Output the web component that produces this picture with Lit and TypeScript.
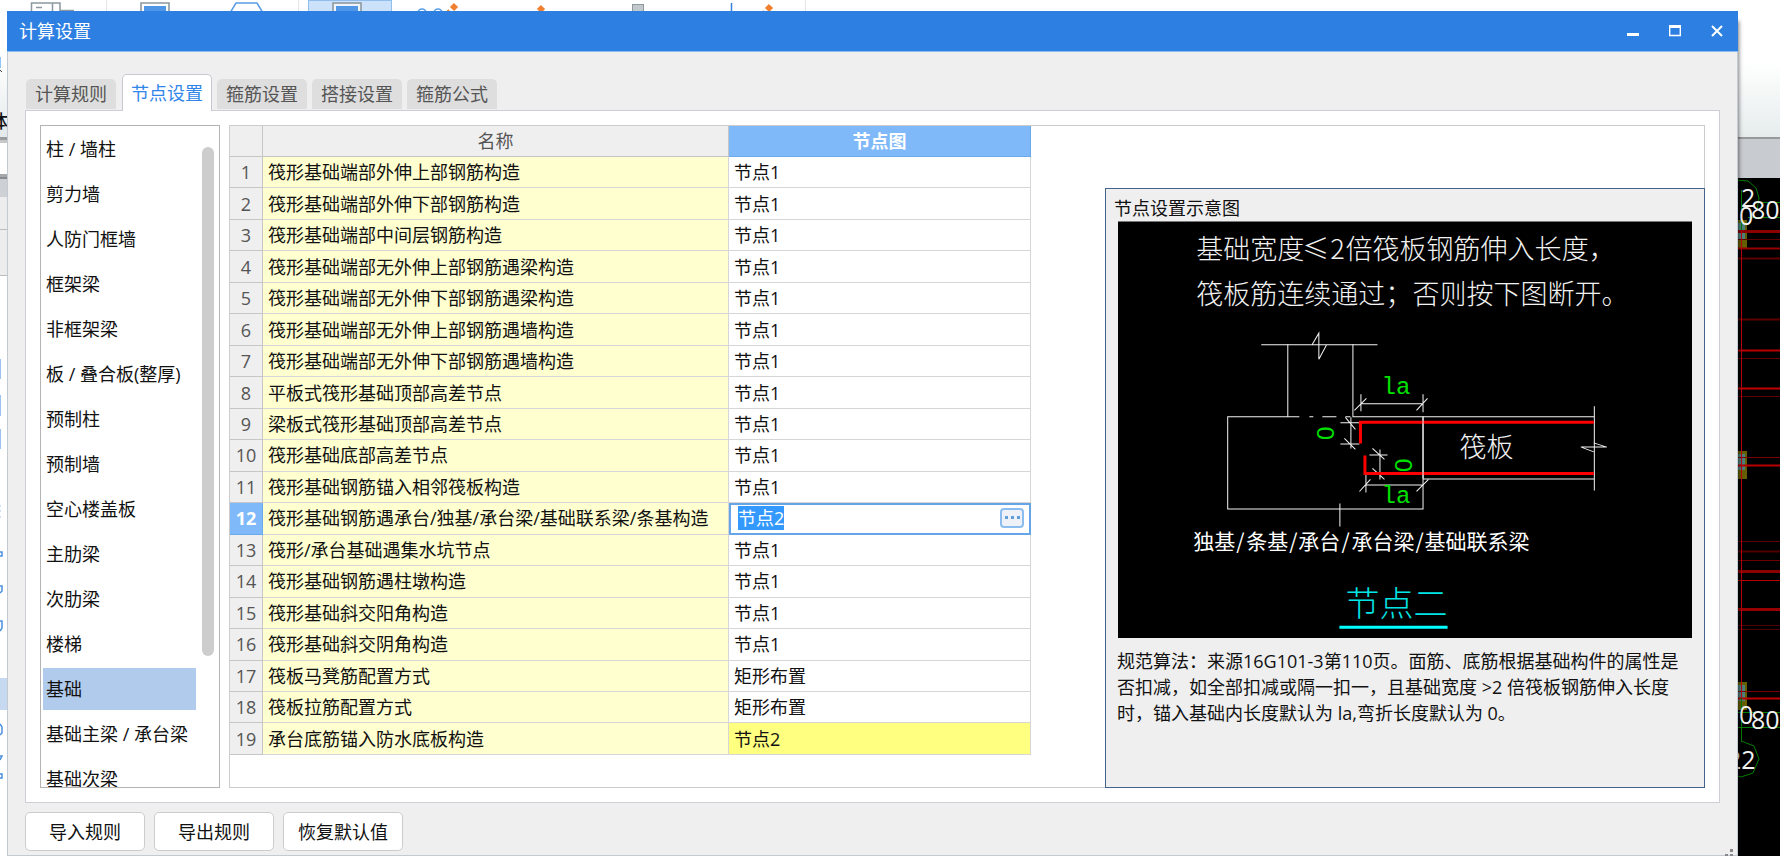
import { LitElement, html, svg, css } from "lit";
import { customElement, property, state } from "lit/decorators.js";
import { classMap } from "lit/directives/class-map.js";

const FONT = css`"Open Sans", "Noto Sans CJK SC", sans-serif`;

interface NodeRow {
  name: string;
  value: string;
}

const ROWS: NodeRow[] = [
  { name: "筏形基础端部外伸上部钢筋构造", value: "节点1" },
  { name: "筏形基础端部外伸下部钢筋构造", value: "节点1" },
  { name: "筏形基础端部中间层钢筋构造", value: "节点1" },
  { name: "筏形基础端部无外伸上部钢筋遇梁构造", value: "节点1" },
  { name: "筏形基础端部无外伸下部钢筋遇梁构造", value: "节点1" },
  { name: "筏形基础端部无外伸上部钢筋遇墙构造", value: "节点1" },
  { name: "筏形基础端部无外伸下部钢筋遇墙构造", value: "节点1" },
  { name: "平板式筏形基础顶部高差节点", value: "节点1" },
  { name: "梁板式筏形基础顶部高差节点", value: "节点1" },
  { name: "筏形基础底部高差节点", value: "节点1" },
  { name: "筏形基础钢筋锚入相邻筏板构造", value: "节点1" },
  { name: "筏形基础钢筋遇承台/独基/承台梁/基础联系梁/条基构造", value: "节点2" },
  { name: "筏形/承台基础遇集水坑节点", value: "节点1" },
  { name: "筏形基础钢筋遇柱墩构造", value: "节点1" },
  { name: "筏形基础斜交阳角构造", value: "节点1" },
  { name: "筏形基础斜交阴角构造", value: "节点1" },
  { name: "筏板马凳筋配置方式", value: "矩形布置" },
  { name: "筏板拉筋配置方式", value: "矩形布置" },
  { name: "承台底筋锚入防水底板构造", value: "节点2" },
];

const CATEGORIES = [
  "柱 / 墙柱", "剪力墙", "人防门框墙", "框架梁", "非框架梁", "板 / 叠合板(整厚)",
  "预制柱", "预制墙", "空心楼盖板", "主肋梁", "次肋梁", "楼梯", "基础",
  "基础主梁 / 承台梁", "基础次梁",
];

const TABS = ["计算规则", "节点设置", "箍筋设置", "搭接设置", "箍筋公式"];

/* The CAD workspace and ribbon that lie behind the dialog. */
@customElement("app-backdrop")
export class AppBackdrop extends LitElement {
  static styles = css`
    :host { display: block; position: absolute; inset: 0; overflow: hidden; background: #fff; }
    svg { position: absolute; display: block; top: 0; }
    .left { left: 0; }
    .right { right: 0; }
    .label { font-family: "Open Sans", sans-serif; font-size: 25px; fill: #f2f2f2; }
    .side { font-family: "Noto Sans CJK SC", sans-serif; font-size: 18px; font-weight: 500; fill: #111; }
  `;

  private ribbon() {
    const pencil = (x: number, y: number) => svg`
      <path d="M${x} ${y + 9} l6 -6" stroke="#f08030" stroke-width="5"/>
      <path d="M${x + 8} ${y + 1} l4 -4" stroke="#f08030" stroke-width="6"/>`;
    return html`<svg class="left" width="1000" height="14" viewBox="0 0 1000 14" fill="none" aria-hidden="true">
      <path d="M31.5 14V3H60V14M52.5 3V14M60 10.5H74M36 7.5H42" stroke="#8c989f" stroke-width="1.5"/>
      <path d="M106.5 0V14M298.5 0V14M805.5 0V14" stroke="#e6e6e6"/>
      <path d="M141 14V3H169V14" stroke="#8c989f" stroke-width="1.6"/>
      <rect x="144" y="6" width="22" height="8" fill="#4f96e6"/>
      <path d="M230 13L236 3H257L263 13" stroke="#5b9de8" stroke-width="1.5"/>
      <rect x="308.500" y="0.500" width="83" height="14" fill="#cbe2fa" stroke="#8fbdf0"/>
      <rect x="333" y="3" width="28" height="12" fill="#eef4fb" stroke="#8c989f" stroke-width="1.6"/>
      <rect x="336" y="6" width="22" height="8" fill="#4f96e6"/>
      <circle cx="422" cy="13" r="4" stroke="#5b9de8" stroke-width="1.6"/>
      <circle cx="438" cy="13" r="4" stroke="#5b9de8" stroke-width="1.6"/>
      ${pencil(444, 8)}${pencil(531, 10)}${pencil(759, 9)}
      <rect x="632.500" y="4.500" width="11" height="10" fill="#c2c8cc" stroke="#8c989f"/>
      <path d="M731.500 3V14" stroke="#3a80d8" stroke-width="1.5"/>
    </svg>`;
  }

  private leftEdge() {
    return html`<svg class="left" width="8" height="856" viewBox="0 0 8 856" fill="none" aria-hidden="true">
      <defs><linearGradient id="fade" x2="0" y2="1"><stop offset="0" stop-color="#fff"/><stop offset="1" stop-color="#e3e9ea"/></linearGradient></defs>
      <rect y="60" width="8" height="77" fill="url(#fade)"/>
      <rect y="57" width="1" height="11" fill="#8ec4f5"/>
      <path d="M0 70l2 2" stroke="#334"/>
      <text class="side" x="-10" y="128">体</text>
      <rect y="137" width="8" height="3" fill="#9a9d9f"/><rect y="140" width="8" height="3" fill="#c5c7c9"/>
      <rect y="174" width="8" height="3" fill="#a5a8ab"/><rect y="177" width="8" height="2" fill="#888c90"/>
      <rect y="179" width="8" height="18" fill="#cdd0d5"/>
      <rect y="197" width="8" height="79" fill="#ededed"/>
      <path d="M0 229.500H8M0 275.500H8" stroke="#bdbdbd"/>
      <path d="M.500 359V379M.500 395V416M.500 429V449" stroke="#9cc3f0"/>
      <path d="M0 506H1M0 511H1M0 517H1" stroke="#9cc3f0"/>
      <path d="M0 552H2V556H0M0 586H2V591L0 593M0 621H2V628L0 631M0 724L2 727V733L0 735M0 756H2L0 760M0 774H2V778H0" stroke="#4a90e0" stroke-width="1.500"/>
      <rect y="678" width="8" height="32" fill="#c7d9f1"/>
    </svg>`;
  }

  private canvas() {
    const line = (y: number, color: string, w = 1) =>
      svg`<path d="M0 ${y + 0.5}H50" stroke=${color} stroke-width=${w}/>`;
    const pier = (y: number, h: number) => svg`
      <rect x="0" y=${y} width="17" height=${h} fill="#665f00"/>
      <rect x="8" y=${y + 3} width="7" height=${h - 12} fill="#4d7f7c"/>`;
    return html`<svg class="right" width="50" height="856" viewBox="0 0 50 856" fill="none" aria-hidden="true">
      <defs><linearGradient id="sky" x2="0" y2="1"><stop offset="0" stop-color="#fff"/><stop offset="1" stop-color="#e6ecec"/></linearGradient></defs>
      <rect y="62" width="50" height="75" fill="url(#sky)"/>
      <rect y="137" width="50" height="2" fill="#97999b"/>
      <rect y="139" width="50" height="39" fill="#c8cbd0"/>
      <rect y="178" width="50" height="678" fill="#000"/>
      ${pier(220, 28)}${pier(451, 28)}${pier(682, 28)}
      ${line(231, "#8b0000", 3)}${line(239, "#5c0000")}${line(248, "#960000", 2)}${line(258, "#5c0000", 2)}
      ${line(319, "#5c0000", 2)}${line(350, "#b80000", 2)}${line(358, "#5c0000")}${line(388, "#c00000", 2)}${line(396, "#5c0000")}
      ${line(457, "#780000")}${line(465, "#b80000", 2)}${line(541, "#600000")}${line(551, "#500000", 2)}${line(560, "#6c0000")}
      ${line(571, "#8b0000", 3)}${line(580, "#b80000")}${line(609, "#960000", 3)}${line(625, "#500000")}${line(629, "#500000")}
      ${line(691, "#780000")}${line(698, "#b80000", 2)}
      <path d="M11.500 230V698" stroke="#c00010"/>
      <path d="M11.500 190V230M30 202.500H50M18 217.500H50M11.500 698V742M0 712.500H50M0 727.500H50" stroke="#007d00"/>
      <path d="M5 180L18 181L26 188L29 198L27 210M11 741L24 746L29 759L23 773L11 777L0 774" stroke="#007d00"/>
      <text class="label" x="11" y="207">2</text>
      <text class="label" x="9" y="225">0</text>
      <text class="label" x="21" y="219">80</text>
      <text class="label" x="9" y="724">0</text>
      <text class="label" x="21" y="729">80</text>
      <text class="label" x="-3" y="769">22</text>
    </svg>`;
  }

  render() {
    return html`${this.ribbon()}${this.leftEdge()}${this.canvas()}`;
  }
}

/* Section drawing of the selected node. */
@customElement("node-diagram")
export class NodeDiagram extends LitElement {
  static styles = css`
    :host { display: block; background: #000; border-top: 1px solid #777; }
    svg { display: block; width: 100%; height: auto; }
    text { font-family: "Noto Sans CJK SC", sans-serif; }
    .note { font-size: 27px; font-weight: 300; fill: #f2f2f2; }
    .caption { font-size: 21px; fill: #fff; }
    .title { font-size: 34px; font-weight: 300; fill: #00e5e5; }
    .dim { font-family: "Liberation Mono", monospace; font-size: 24px; fill: #00e000; }
    .zero { font-family: "Liberation Sans", sans-serif; font-size: 24px; fill: #00e000; text-anchor: middle; }
  `;

  render() {
    return html`<svg viewBox="0 0 573 415" fill="none" role="img" aria-label="节点二">
      <text class="note" y="37"><tspan x="78">基础宽度</tspan><tspan x="184">≤</tspan><tspan x="212">2</tspan><tspan x="227">倍筏板钢筋伸入长度，</tspan></text>
      <text class="note" x="78" y="82">筏板筋连续通过；否则按下图断开。</text>
      <g stroke="#f4f4f4">
        <path d="M143 122.500H259M194 122L200.500 111V137L208 123"/>
        <path d="M169.500 122V194M234.500 122V194M181 194.500H109.500V286.500H304.500V194M191 194.500H195M204 194.500H218M227 194.500H232M234 194.500H475M304 256.500H475M475.500 184V268"/>
        <path d="M462 224.500H488M475 220.500L487 224.500M463 225L475 229.500"/>
        <path d="M242.500 172V189M304.500 172V190M242 181.500H304M236 188L248 176M298 188L309 176"/>
        <path d="M222 200.500H241M222 221.500H241M232.500 195V226M227 195L237 207M226 216L237 227"/>
        <path d="M251 232.500H269M251 251.500H269M261.500 227V257M254 226L266 237M254 246L266 257"/>
        <path d="M247.500 252V270M247 262.500H304M241 269L252 257M298 269L310 257"/>
        <path d="M221.500 281V304"/>
      </g>
      <path d="M475 200H242V221M246.500 233V251H475" stroke="#f00" stroke-width="3"/>
      <path d="M304.500 194V256" stroke="#f4f4f4"/>
      <text class="dim" x="263" y="172">la</text>
      <text class="dim" x="263" y="281">la</text>
      <text class="zero" transform="translate(216 211) rotate(-90)">0</text>
      <text class="zero" transform="translate(293 243) rotate(-90)">0</text>
      <text class="note" x="341" y="235">筏板</text>
      <text class="caption" y="326"><tspan x="75">独基</tspan><tspan x="118">/</tspan><tspan x="128">条基</tspan><tspan x="171">/</tspan><tspan x="180">承台</tspan><tspan x="223">/</tspan><tspan x="233">承台梁</tspan><tspan x="297">/</tspan><tspan x="306">基础联系梁</tspan></text>
      <text class="title" x="227" y="393">节点二</text>
      <path d="M221 404.500H329" stroke="#0ff" stroke-width="3"/>
    </svg>`;
  }
}

@customElement("node-preview")
export class NodePreview extends LitElement {
  static styles = css`
    :host { display: flex; flex-direction: column; box-sizing: border-box; background: #efefef; border: 1px solid #44638f; padding: 6px 12px 0 8px; font: 18px/26px ${FONT}; color: #111; }
    .heading { margin: 0; font-size: 18px; font-weight: 400; line-height: 26px; }
    .diagram { margin-left: 4px; }
    .note { margin: 10px 0 0 3px; white-space: nowrap; }
  `;

  render() {
    return html`
      <h2 class="heading">节点设置示意图</h2>
      <node-diagram class="diagram"></node-diagram>
      <p class="note">规范算法：来源16G101-3第110页。面筋、底筋根据基础构件的属性是<br>否扣减，如全部扣减或隔一扣一，且基础宽度 &gt;2 倍筏板钢筋伸入长度<br>时，锚入基础内长度默认为 la,弯折长度默认为 0。</p>`;
  }
}

@customElement("node-table")
export class NodeTable extends LitElement {
  static styles = css`
    :host { display: block; }
    .grid { border-collapse: separate; border-spacing: 0; table-layout: fixed; width: 801px; height: 629px; font: 18px/24px ${FONT}; color: #111; }
    .index { width: 33px; }
    .name { width: 466px; }
    .value { width: 302px; }
    th, td { box-sizing: border-box; padding: 0; border: 0 solid #d6d6d6; border-width: 0 1px 1px 0; font-weight: 400; overflow: hidden; white-space: nowrap; }
    th { background: #efefef; border-color: #c6c6c6; color: #555; text-align: center; }
    thead th { height: 31px; }
    thead .current { background: #7fb9f9; border-color: #6aa9ec; color: #fff; font-weight: 700; }
    td { padding-left: 5px; }
    .label { background: #ffffcf; }
    .changed { background: #ffff80; }
    .active { background: #7fb9f9; border-color: #6aa9ec; color: #fff; font-weight: 700; }
    .editing { padding: 0; border-color: #66a6e8; box-shadow: inset 2px 2px #66a6e8, inset -1px -1px #66a6e8; }
    .editor { display: flex; align-items: center; height: 24px; padding: 0 6px 0 9px; }
    .field { flex: 1; min-width: 0; height: 24px; border: 0; padding: 0; outline: 0; background: none; font: inherit; color: #111; }
    .field::selection { background: #3399ff; color: #fff; }
    .more { display: flex; align-items: center; justify-content: center; width: 24px; height: 20px; padding: 0; border: 2px solid #8bbdf0; border-radius: 4px; background: #eef2f8; }
  `;

  @state() private selected = 11;

  firstUpdated() {
    const field = this.renderRoot.querySelector<HTMLInputElement>(".field");
    field?.focus();
    field?.select();
  }

  private valueCell(row: NodeRow, i: number) {
    if (i !== this.selected) {
      return html`<td class=${classMap({ changed: i === ROWS.length - 1 })}>${row.value}</td>`;
    }
    return html`<td class="editing"><div class="editor">
      <input class="field" aria-label=${row.name} .value=${row.value}>
      <button class="more" aria-label="更多">
        <svg width="18" height="6" viewBox="0 0 18 6" fill="#5f9fe0"><rect x="2" y="1" width="3" height="3"/><rect x="8" y="1" width="3" height="3"/><rect x="14" y="1" width="3" height="3"/></svg>
      </button>
    </div></td>`;
  }

  render() {
    return html`<table class="grid">
      <colgroup><col class="index"><col class="name"><col class="value"></colgroup>
      <thead><tr><th></th><th scope="col">名称</th><th scope="col" class="current">节点图</th></tr></thead>
      <tbody>${ROWS.map((row, i) => html`<tr>
        <th scope="row" class=${classMap({ active: i === this.selected })}>${i + 1}</th>
        <td class="label">${row.name}</td>${this.valueCell(row, i)}
      </tr>`)}</tbody>
    </table>`;
  }
}

@customElement("category-list")
export class CategoryList extends LitElement {
  static styles = css`
    :host { display: block; position: relative; box-sizing: border-box; overflow: hidden; border: 1px solid #b4b4b4; background: #fff; }
    .items { display: flex; flex-direction: column; gap: 3px; list-style: none; margin: 0; padding: 2px 23px 0 2px; }
    .item { display: block; width: 100%; height: 42px; padding: 0 0 0 3px; border: 0; background: none; text-align: left; white-space: nowrap; font: 18px/42px ${FONT}; color: #111; }
    .selected { background: #b1cbec; }
    .thumb { position: absolute; top: 21px; right: 5px; bottom: 131px; width: 12px; border-radius: 6px; background: #cdcdcd; }
  `;

  @property() selected = "";

  render() {
    return html`<ul class="items">${CATEGORIES.map((c) => html`<li>
      <button class=${classMap({ item: true, selected: c === this.selected })} @click=${() => (this.selected = c)}>${c}</button>
    </li>`)}</ul><div class="thumb"></div>`;
  }
}

@customElement("app-root")
export class AppRoot extends LitElement {
  static styles = css`
    :host { display: block; position: relative; height: 100vh; overflow: hidden; padding: 11px 42px 0 7px; box-sizing: border-box; font: 18px/24px ${FONT}; color: #111; }
    .dialog { position: relative; display: flex; flex-direction: column; height: 100%; box-sizing: border-box; background: #efefef; box-shadow: 3px 8px 4px -2px rgba(0, 0, 0, 0.5); }
    .titlebar { display: flex; align-items: center; height: 40px; padding: 0 0 0 12px; background: #2d80e2; border-bottom: 1px solid #8dbcf3; color: #fff; }
    .caption { flex: 1; margin: 0; font-size: 18px; font-weight: 400; }
    .control { display: flex; align-items: center; justify-content: center; width: 42px; height: 40px; padding: 0; border: 0; background: none; }
    .frame { display: flex; flex: 1; flex-direction: column; min-height: 0; padding: 22px 17px 4px 17px; border: 1px solid #c3cad2; border-top: 0; }
    .tabs { display: flex; align-items: flex-end; gap: 5px; height: 36px; padding-left: 1px; }
    .tab { height: 30px; margin-bottom: 1px; padding: 0 9px; border: 0; border-radius: 5px 5px 0 0; background: #dedede; color: #555; font: inherit; }
    .current { position: relative; height: 37px; margin: 0 0 -1px 1px; padding: 0 8px; border: 1px solid #c6cad0; border-bottom: 0; background: #fff; color: #3186ea; }
    .panel { display: flex; flex: 1; gap: 9px; min-height: 0; padding: 14px; border: 1px solid #ccd0d4; background: #fff; }
    .categories { width: 180px; }
    .content { display: flex; flex: 1; justify-content: space-between; min-width: 0; border: 1px solid #ccc; }
    .preview { width: 600px; margin: 62px -1px -1px 0; }
    .actions { display: flex; gap: 9px; padding-top: 9px; }
    .action { width: 120px; height: 39px; padding: 0; border: 1px solid #ccc; border-radius: 5px; background: #fff; font: inherit; color: #111; }
    .grip { position: absolute; right: 4px; bottom: 0; }
  `;

  @state() private tab = 1;

  render() {
    return html`
      <app-backdrop></app-backdrop>
      <section class="dialog" role="dialog" aria-label="计算设置">
        <header class="titlebar">
          <h1 class="caption">计算设置</h1>
          <button class="control" aria-label="最小化"><svg width="12" height="12" viewBox="0 0 12 12"><rect y="8" width="12" height="3" fill="#fff"/></svg></button>
          <button class="control" aria-label="最大化"><svg width="12" height="12" viewBox="0 0 12 12" fill="none"><path d="M.7 1V10.500H11.300V1" stroke="#fff" stroke-width="1.400"/><rect width="12" height="3" fill="#fff"/></svg></button>
          <button class="control" aria-label="关闭"><svg width="12" height="12" viewBox="0 0 12 12" fill="none"><path d="M1 1L11 11M11 1L1 11" stroke="#fff" stroke-width="2"/></svg></button>
        </header>
        <div class="frame">
          <nav class="tabs">${TABS.map((t, i) => html`<button class=${classMap({ tab: true, current: i === this.tab })} @click=${() => (this.tab = i)}>${t}</button>`)}</nav>
          <main class="panel">
            <category-list class="categories" selected="基础"></category-list>
            <div class="content">
              <node-table></node-table>
              <node-preview class="preview"></node-preview>
            </div>
          </main>
          <footer class="actions">
            <button class="action">导入规则</button>
            <button class="action">导出规则</button>
            <button class="action">恢复默认值</button>
          </footer>
        </div>
        <svg class="grip" width="10" height="8" viewBox="0 0 10 8" fill="#888" aria-hidden="true"><rect x="6" y="1" width="3" height="3"/><rect x="6" y="6" width="3" height="2"/><rect x="1" y="6" width="3" height="2"/></svg>
      </section>`;
  }
}
